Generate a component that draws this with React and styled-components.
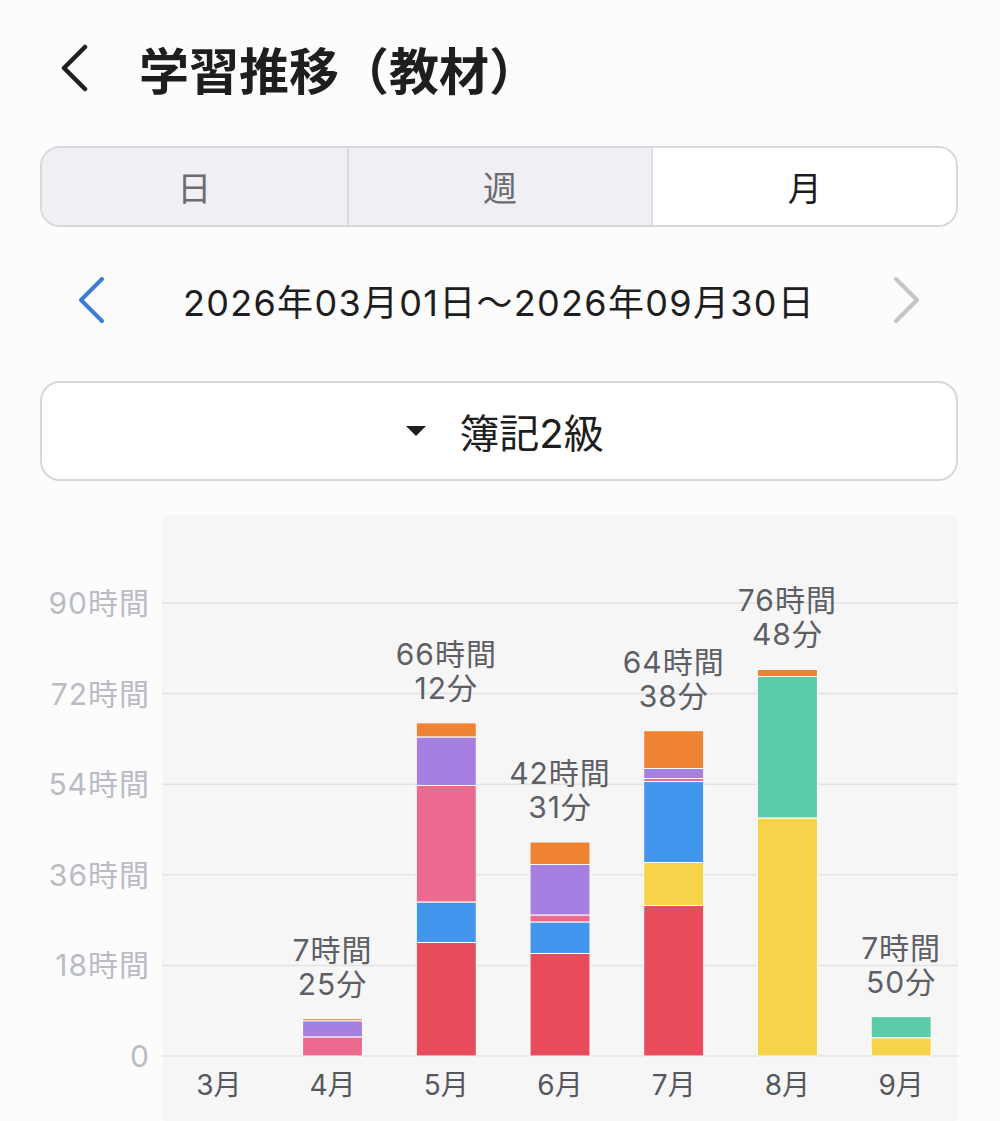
import React from 'react'
import styled, { createGlobalStyle } from 'styled-components'

const Global = createGlobalStyle`
  html, body {
    margin: 0;
    padding: 0;
    background: #fcfcfd;
  }
  body {
    font-family: "Inter", "Noto Sans CJK JP", sans-serif;
    color: #1c1c1e;
    overflow: hidden;
  }
`

const Page = styled.div`
  width: 1000px;
  height: 1121px;
  box-sizing: border-box;
  padding: 0 42px 0 40px;
  display: flex;
  flex-direction: column;
`

const Header = styled.header`
  height: 146px;
  box-sizing: border-box;
  padding-bottom: 10px;
  display: flex;
  align-items: center;
`

const BackButton = styled.button`
  border: none;
  background: none;
  padding: 0;
  margin-left: 19px;
  display: flex;
  align-items: center;
  color: #1e1e20;
`

const Title = styled.h1`
  margin: 0 0 0 50px;
  font-size: 50px;
  font-weight: 700;
  color: #1e1e20;
`

const Segmented = styled.div`
  height: 81px;
  box-sizing: border-box;
  border: 2px solid #d7d7dc;
  border-radius: 20px;
  overflow: hidden;
  display: grid;
  grid-template-columns: 1fr 1fr 1fr;
`

const Segment = styled.div`
  display: flex;
  align-items: center;
  justify-content: center;
  font-size: 34px;
  background: ${p => (p.$active ? '#ffffff' : '#efeff4')};
  color: ${p => (p.$active ? '#1c1c1e' : '#6b6b70')};
  border-left: ${p => (p.$first ? 'none' : '2px solid #dcdce1')};
`

const DateRow = styled.div`
  height: 74px;
  margin: 36px 0 44px;
  padding: 0 36px;
  display: flex;
  align-items: center;
  justify-content: space-between;
`

const NavArrow = styled.button`
  border: none;
  background: none;
  padding: 0;
  display: flex;
  color: ${p => p.$color};
`

const DateText = styled.div`
  font-size: 36px;
  letter-spacing: 1.3px;
  color: #1e1e20;
`

const Picker = styled.div`
  height: 100px;
  box-sizing: border-box;
  border: 2px solid #d7d7dc;
  border-radius: 20px;
  background: #ffffff;
  display: flex;
  align-items: center;
  justify-content: center;
  gap: 33px;
  padding-left: 12px;
`

const Caret = styled.span`
  width: 0;
  height: 0;
  border-left: 10px solid transparent;
  border-right: 10px solid transparent;
  border-top: 10px solid #1e1e20;
`

const PickerText = styled.span`
  font-size: 40px;
  color: #1e1e20;
`

const ChartBox = styled.div`
  margin-top: 34px;
  display: flex;
`

const AxisText = styled.text`
  font-family: "Inter", "Noto Sans CJK JP", sans-serif;
  font-size: 30px;
  letter-spacing: 1px;
  fill: #babcc3;
`

const MonthText = styled.text`
  font-family: "Inter", "Noto Sans CJK JP", sans-serif;
  font-size: 28px;
  fill: #55575d;
`

const ValueText = styled.text`
  font-family: "Inter", "Noto Sans CJK JP", sans-serif;
  font-size: 30px;
  letter-spacing: 1px;
  fill: #5d5f65;
`

const COLORS = {
  red: '#e84b5c',
  pink: '#ec6a8f',
  blue: '#4296ee',
  purple: '#a580e0',
  orange: '#ee8334',
  yellow: '#f6d348',
  teal: '#5ccba9',
}

const MONTHS = [
  { label: '3月', parts: [] },
  { label: '4月', hours: '7時間', mins: '25分', parts: [['pink', 3.8], ['purple', 3.2], ['orange', 0.42]] },
  { label: '5月', hours: '66時間', mins: '12分', parts: [['red', 22.55], ['blue', 8.05], ['pink', 23.15], ['purple', 9.64], ['orange', 2.8]] },
  { label: '6月', hours: '42時間', mins: '31分', parts: [['red', 20.37], ['blue', 6.26], ['pink', 1.39], ['purple', 10.03], ['orange', 4.47]] },
  { label: '7月', hours: '64時間', mins: '38分', parts: [['red', 29.9], ['yellow', 8.54], ['blue', 16.09], ['pink', 0.6], ['purple', 1.99], ['orange', 7.51]] },
  { label: '8月', hours: '76時間', mins: '48分', parts: [['yellow', 47.29], ['teal', 28.11], ['orange', 1.39]] },
  { label: '9月', hours: '7時間', mins: '50分', parts: [['yellow', 3.62], ['teal', 4.21]] },
]

const TICKS = [0, 18, 36, 54, 72, 90]

// chart geometry, in page coordinates (the svg viewBox matches the page)
const TOP = 515
const HEIGHT = 606
const PLOT_LEFT = 162
const PLOT_RIGHT = 958
const BASE_Y = 1056
const PX_PER_HOUR = (1056 - 603) / 90
const SLOT = (PLOT_RIGHT - PLOT_LEFT) / 7
const BAR_W = 60

function Chevron({ dir = 'left', stroke = 4.5 }) {
  const d = dir === 'left' ? 'M26 3 L5 24 L26 45' : 'M4 3 L25 24 L4 45'
  return (
    <svg width={30} height={48} viewBox="0 0 30 48" fill="none">
      <path d={d} stroke="currentColor" strokeWidth={stroke} strokeLinecap="round" strokeLinejoin="round" />
    </svg>
  )
}

function Chart() {
  return (
    <svg width={918} height={HEIGHT} viewBox={`40 ${TOP} 918 ${HEIGHT}`}>
      <rect x={PLOT_LEFT} y={TOP} width={PLOT_RIGHT - PLOT_LEFT} height={HEIGHT} rx={4} fill="#f6f6f7" />
      {TICKS.map(t => {
        const y = BASE_Y - t * PX_PER_HOUR
        return (
          <g key={t}>
            <line x1={PLOT_LEFT} x2={PLOT_RIGHT} y1={y} y2={y} stroke="#e3e3e6" strokeWidth={1.5} />
            <AxisText x={150} y={y} textAnchor="end" dominantBaseline="central">
              {t === 0 ? '0' : `${t}時間`}
            </AxisText>
          </g>
        )
      })}
      {MONTHS.map((m, i) => {
        const cx = PLOT_LEFT + SLOT * (i + 0.5)
        let y = BASE_Y
        const rects = m.parts.map(([c, h], j) => {
          const hp = h * PX_PER_HOUR
          y -= hp
          return <rect key={j} x={cx - BAR_W / 2} y={y} width={BAR_W} height={hp} fill={COLORS[c]} stroke="#fff" strokeWidth={1} />
        })
        return (
          <g key={m.label}>
            {rects}
            {m.hours && (
              <>
                <ValueText x={cx} y={y - 69} textAnchor="middle" dominantBaseline="central">{m.hours}</ValueText>
                <ValueText x={cx} y={y - 35} textAnchor="middle" dominantBaseline="central">{m.mins}</ValueText>
              </>
            )}
            <MonthText x={cx} y={1085} textAnchor="middle" dominantBaseline="central">{m.label}</MonthText>
          </g>
        )
      })}
    </svg>
  )
}

export default function App() {
  return (
    <>
      <Global />
      <Page>
        <Header>
          <BackButton aria-label="戻る">
            <Chevron dir="left" stroke={4.5} />
          </BackButton>
          <Title>学習推移（教材）</Title>
        </Header>

        <Segmented>
          <Segment $first>日</Segment>
          <Segment>週</Segment>
          <Segment $active>月</Segment>
        </Segmented>

        <DateRow>
          <NavArrow $color="#3b7bd4" aria-label="前へ">
            <Chevron dir="left" stroke={4} />
          </NavArrow>
          <DateText>2026年03月01日〜2026年09月30日</DateText>
          <NavArrow $color="#c4c4ca" aria-label="次へ">
            <Chevron dir="right" stroke={4} />
          </NavArrow>
        </DateRow>

        <Picker>
          <Caret />
          <PickerText>簿記2級</PickerText>
        </Picker>

        <ChartBox>
          <Chart />
        </ChartBox>
      </Page>
    </>
  )
}
